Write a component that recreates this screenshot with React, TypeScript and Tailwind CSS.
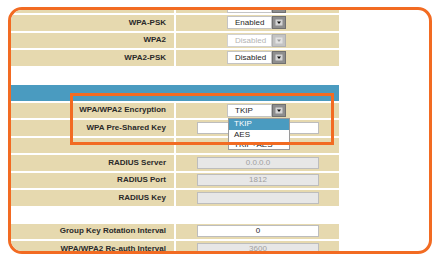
import React from "react";

const FONT = "font-['Liberation_Sans',Arial,sans-serif]";

function DropBtn({ disabled }: { disabled?: boolean }) {
  return (
    <svg width="14" height="13" viewBox="0 0 14 13" className="block shrink-0">
      <rect x="0" y="0" width="14" height="13" fill={disabled ? "#c4c4c4" : "#8e8e8e"} />
      <rect x="0.5" y="0.5" width="13" height="12" fill="none" stroke={disabled ? "#b0b0b0" : "#707070"} />
      <rect x="3.5" y="3.5" width="7" height="6" fill={disabled ? "#e2e2e2" : "#d4d4d4"} />
      <path d="M5 5.5 L9 5.5 L7 8 Z" fill={disabled ? "#9a9a9a" : "#111"} />
    </svg>
  );
}

function SelectBox({ value, disabled }: { value: string; disabled?: boolean }) {
  return (
    <div className="ml-[51px] flex h-[13px] w-[59px]">
      <div
        className={
          disabled
            ? "flex-1 border border-[#d2d2d2] bg-white pl-[7px] text-[8px] leading-[11px] text-[#b4b4b4]"
            : "flex-1 border border-[#c4c4c4] bg-white pl-[7px] text-[8px] leading-[11px] text-[#1e1e1e]"
        }
      >
        {value}
      </div>
      <DropBtn disabled={disabled} />
    </div>
  );
}

function TextBox({ value, disabled }: { value?: string; disabled?: boolean }) {
  return (
    <div
      className={
        disabled
          ? "ml-[21px] h-[12px] w-[122px] border border-[#bdbdbd] bg-[#e7e7e7] text-center text-[8px] leading-[10px] text-[#a0a0a0]"
          : "ml-[21px] h-[12px] w-[122px] border border-[#bdbdbd] bg-white text-center text-[8px] leading-[10px] text-[#1e1e1e]"
      }
    >
      {value}
    </div>
  );
}

function Row({ label, children }: { label?: string; children?: React.ReactNode }) {
  return (
    <div className="flex h-[15.5px] gap-[2px]">
      <div className="flex w-[163px] items-center justify-end bg-[#e6d9af] pr-[8px] text-[8px] font-bold text-[#2a2a2a]">
        {label}
      </div>
      <div className="flex flex-1 items-center bg-[#e6d9af]">{children}</div>
    </div>
  );
}

export default function App() {
  return (
    <div className={`h-[261px] w-[440px] bg-white pl-[8px] pt-[7px] ${FONT}`}>
      <div className="relative h-[247px] w-[424px] overflow-hidden rounded-[14px] border-[3px] border-[#f26b22] bg-white">
        <div className="-mt-[12.5px] flex w-[328px] flex-col gap-[2px]">
          <Row>
            <div className="mt-[2px] self-start">
              <SelectBox value="Enabled" />
            </div>
          </Row>
          <Row label="WPA-PSK">
            <SelectBox value="Enabled" />
          </Row>
          <Row label="WPA2">
            <SelectBox value="Disabled" disabled />
          </Row>
          <Row label="WPA2-PSK">
            <SelectBox value="Disabled" />
          </Row>
          <div className="h-[15.5px]" />
          <div className="h-[15.5px] bg-[#4a9bc0]" />
          <Row label="WPA/WPA2 Encryption">
            <SelectBox value="TKIP" />
          </Row>
          <Row label="WPA Pre-Shared Key">
            <TextBox />
          </Row>
          <Row />
          <Row label="RADIUS Server">
            <TextBox value="0.0.0.0" disabled />
          </Row>
          <Row label="RADIUS Port">
            <TextBox value="1812" disabled />
          </Row>
          <Row label="RADIUS Key">
            <TextBox disabled />
          </Row>
          <div className="h-[14px]" />
          <Row label="Group Key Rotation Interval">
            <TextBox value="0" />
          </Row>
          <Row label="WPA/WPA2 Re-auth Interval">
            <TextBox value="3600" disabled />
          </Row>
        </div>

        {/* open dropdown list */}
        <div className="absolute left-[217px] top-[108px] flex h-[32px] w-[62px] flex-col overflow-hidden border border-[#9a9a9a] bg-white text-[8px] leading-[10.5px]">
          <div className="h-[10.5px] shrink-0 bg-[#4a9bc0] pl-[5px] text-white">TKIP</div>
          <div className="h-[10.5px] shrink-0 pl-[5px] text-[#1e1e1e]">AES</div>
          <div className="h-[10.5px] shrink-0 pl-[5px] text-[#1e1e1e]">TKIP+AES</div>
        </div>

        {/* highlight frame */}
        <div className="absolute left-[59px] top-[83px] h-[52px] w-[264px] border-[3px] border-[#f26b22]" />
      </div>
    </div>
  );
}
